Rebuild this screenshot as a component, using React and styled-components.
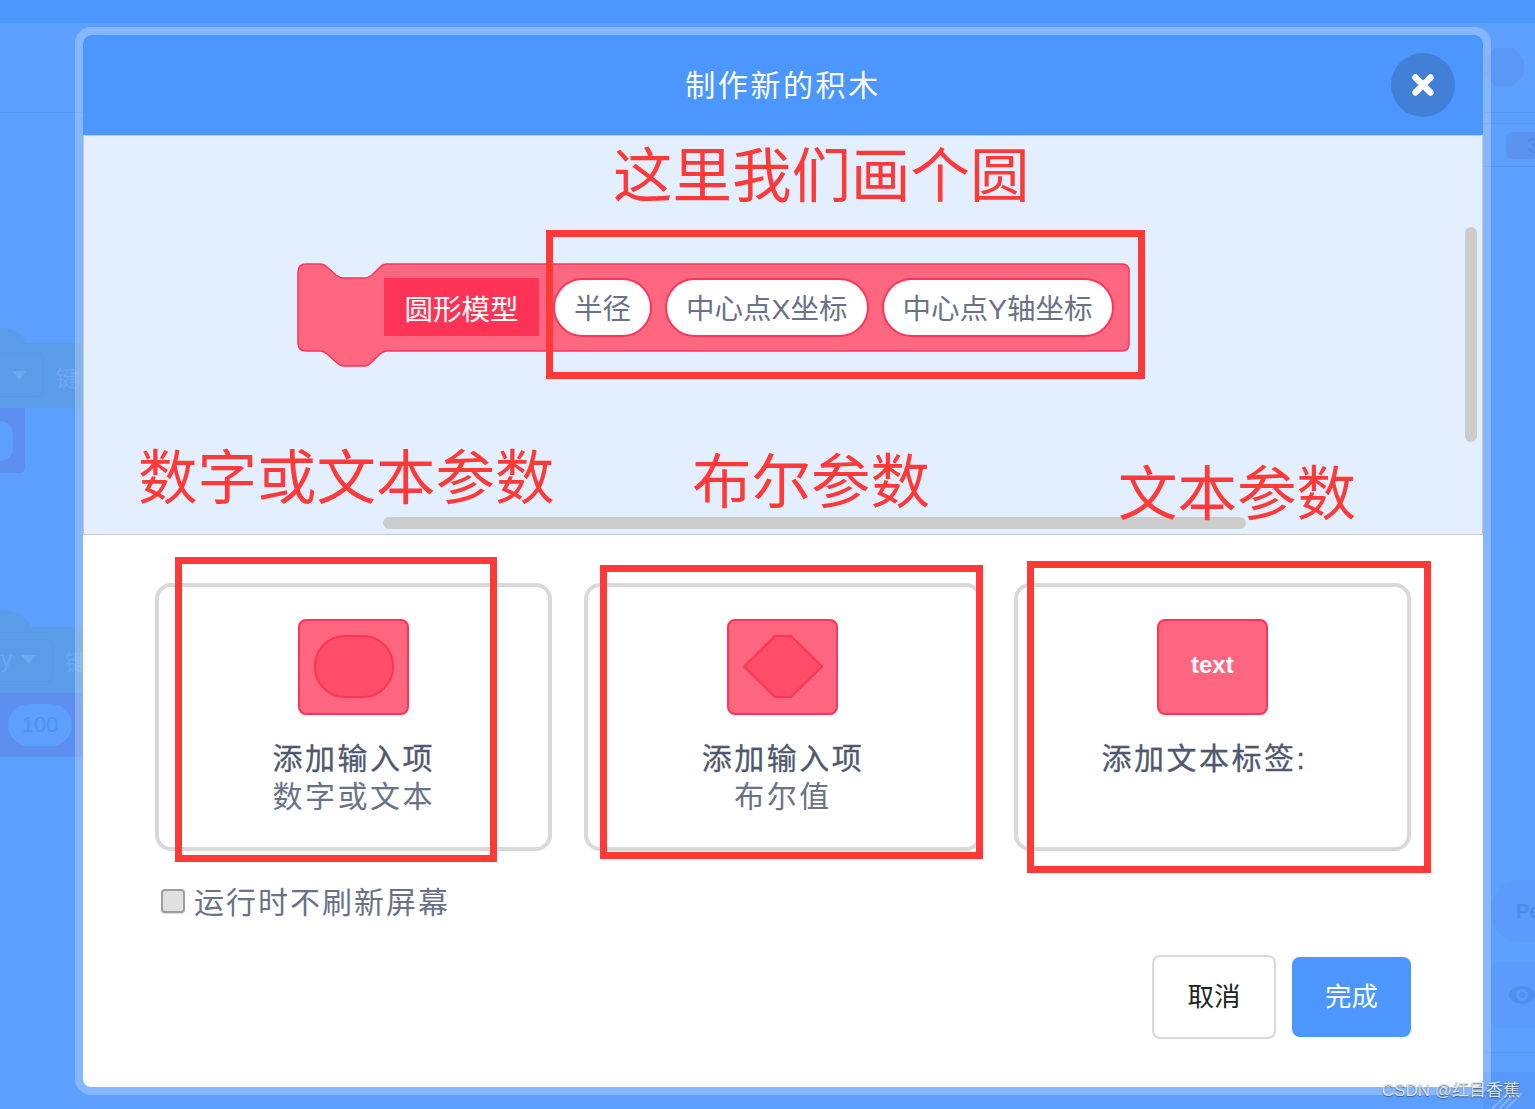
import React from "react";
import styled, { createGlobalStyle } from "styled-components";

const CJK = `"Liberation Sans", "Noto Sans CJK SC", sans-serif`;

const GlobalStyle = createGlobalStyle`
  html, body {
    margin: 0;
    padding: 0;
    background: #5c9fff;
  }
  * {
    box-sizing: border-box;
  }
`;

const Page = styled.div`
  position: relative;
  width: 1535px;
  height: 1109px;
  overflow: hidden;
  background: #5c9fff;
  font-family: ${CJK};
`;

const TopBar = styled.div`
  height: 23px;
  background: #4c97ff;
`;

/* faint workspace behind the overlay */
const LeftPane = styled.div`
  position: absolute;
  left: 0;
  top: 112px;
  width: 83px;
  display: flex;
  flex-direction: column;
`;

const RightPane = styled.div`
  position: absolute;
  left: 1483px;
  right: 0;
  top: 47px;
  bottom: 0;
  display: flex;
  flex-direction: column;
  justify-content: space-between;
`;

const PaneGroup = styled.div`
  display: flex;
  flex-direction: column;
`;

const Rule = styled.div`
  height: 1px;
  flex: none;
  margin-top: ${(p) => p.$top || 0}px;
  background: #5596f5;
`;

const Script = styled.div`
  display: flex;
  flex-direction: column;
  margin-top: ${(p) => p.$top}px;
`;

const Hat = styled.div`
  width: ${(p) => p.$w}px;
  height: ${(p) => p.$h}px;
  background: #5b9ce8;
  border-radius: 0 100% 0 0;
`;

const ScriptRow = styled.div`
  width: ${(p) => p.$w || 83}px;
  height: ${(p) => p.$h}px;
  display: flex;
  align-items: center;
  gap: 12px;
  background: ${(p) => p.$color || "#5b9ce8"};
  border-radius: ${(p) => p.$radius || "0"};
`;

const Dropdown = styled.div`
  width: ${(p) => p.$w}px;
  height: 43px;
  flex: none;
  display: flex;
  align-items: center;
  justify-content: flex-end;
  gap: 9px;
  padding-right: 15px;
  border: 1px solid #5a96e2;
  border-left: none;
  border-radius: 0 6px 6px 0;
  color: #6aa8f2;
  font-size: 22px;
`;

const FaintKey = styled.span`
  color: #6aa8f2;
  font-size: 22px;
  white-space: nowrap;
`;

const Socket = styled.div`
  width: 13px;
  height: 40px;
  background: #5c9fff;
  border-radius: 0 20px 20px 0;
`;

const CountPill = styled.div`
  width: 64px;
  height: 42px;
  margin-left: 8px;
  display: flex;
  align-items: center;
  justify-content: center;
  background: #5c9fff;
  border-radius: 21px;
  color: #5090f0;
  font-size: 22px;
`;

const SideChip = styled.div`
  width: 40px;
  height: 27px;
  margin: 8px 0 0 23px;
  padding-left: 21px;
  background: #5a94ee;
  border-radius: 7px;
  color: #4f8be6;
  font-size: 22px;
  line-height: 27px;
  font-weight: 700;
`;

const SidePill = styled.div`
  width: 70px;
  height: 62px;
  margin-left: 8px;
  padding-left: 25px;
  background: #5a9bfb;
  border-radius: 30px;
  color: #4f8be6;
  font-size: 20px;
  font-weight: 700;
  line-height: 62px;
`;

const SideBox = styled.div`
  width: 60px;
  height: 66px;
  margin: 20px 0 0 8px;
  padding-left: 17px;
  display: flex;
  align-items: center;
  background: #5a9bfb;
  border-radius: 6px;
`;

const SideFooter = styled.div`
  height: 37px;
  margin-top: 19px;
  display: flex;
  align-items: flex-end;
  padding-left: 7px;
  background: #5699fb;
`;

const Modal = styled.div`
  position: relative;
  z-index: 1;
  width: 1416px;
  height: 1068px;
  margin: 4px 0 0 75px;
  border: 8px solid rgba(255, 255, 255, 0.25);
  border-radius: 16px;
  background-clip: padding-box;
`;

const ModalInner = styled.div`
  height: 100%;
  display: flex;
  flex-direction: column;
  border-radius: 8px;
  overflow: hidden;
  background: #fff;
`;

const Header = styled.header`
  position: relative;
  height: 100px;
  flex: none;
  padding-bottom: 4px;
  display: flex;
  align-items: center;
  justify-content: center;
  background: #4c97ff;
  color: #fff;
  font-size: 30px;
  letter-spacing: 2.6px;
`;

const CloseButton = styled.button`
  position: absolute;
  right: 28px;
  top: 18px;
  width: 64px;
  height: 64px;
  padding: 0;
  border: none;
  border-radius: 50%;
  background: #4280d7;
  display: flex;
  align-items: center;
  justify-content: center;
`;

const Preview = styled.section`
  position: relative;
  height: 400px;
  flex: none;
  padding: 128px 0 0 214px;
  background: #e3efff;
  border: 1px solid #c9c9c9;
  overflow: hidden;
`;

const Block = styled.div`
  position: relative;
  width: 832px;
  height: 88px;
  display: flex;
  align-items: center;
  gap: 13px;
  padding: 0 0 2px 86px;
`;

const BlockShape = styled.svg`
  position: absolute;
  left: 0;
  top: 0;
  overflow: visible;
`;

const BlockLabel = styled.div`
  position: relative;
  width: 155px;
  height: 58px;
  margin-right: 1px;
  display: flex;
  align-items: center;
  justify-content: center;
  background: #ff3355;
  color: #fff;
  font-size: 28.5px;
`;

const Pill = styled.div`
  position: relative;
  height: 59px;
  padding: 0 19px 1px;
  display: flex;
  align-items: center;
  background: #fff;
  border: 2px solid #ff3355;
  border-radius: 30px;
  color: #6b7188;
  font-size: 28.5px;
  white-space: nowrap;
`;

const ScrollThumb = styled.div`
  position: absolute;
  background: #cccccc;
  border-radius: 6px;
  ${(p) =>
    p.$vertical
      ? `right: 5px; top: 91px; width: 12px; height: 215px;`
      : `left: 299px; bottom: 5px; width: 863px; height: 12px;`}
`;

const Body = styled.section`
  flex: 1;
  padding: 48px 72px 0;
`;

const Cards = styled.div`
  display: grid;
  grid-template-columns: repeat(3, 1fr);
  gap: 32px;
`;

const Card = styled.div`
  height: 268px;
  padding-top: 32px;
  display: flex;
  flex-direction: column;
  align-items: center;
  border: 4px solid #d9d9d9;
  border-radius: 16px;
`;

const IconBox = styled.div`
  width: 111px;
  height: 96px;
  flex: none;
  display: flex;
  align-items: center;
  justify-content: center;
  padding-bottom: ${(p) => p.$lift || 0}px;
  background: #ff6680;
  border: 2px solid #ff3355;
  border-radius: 8px;
`;

const IconText = styled.span`
  color: #fff;
  font-family: "Liberation Sans", sans-serif;
  font-size: 24px;
  font-weight: 700;
`;

const CardLabel = styled.div`
  margin: 25px ${(p) => p.$shift || 0}px 0 0;
  color: #50576e;
  font-size: 30px;
  line-height: 38px;
  letter-spacing: 2.5px;
  text-align: center;
  -webkit-text-stroke: 0.3px #50576e;
`;

const CardSub = styled.div`
  color: #6b7188;
  font-size: 30px;
  line-height: 38px;
  letter-spacing: 2.5px;
  text-align: center;
`;

const CheckRow = styled.label`
  display: flex;
  align-items: flex-start;
  gap: 9px;
  margin: 33px 0 0 6px;
  height: 39px;
  color: #6b7188;
  font-size: 30px;
  line-height: 38px;
  letter-spacing: 2px;
`;

const CheckBox = styled.span`
  width: 24px;
  height: 24px;
  margin-top: 5px;
  flex: none;
  background: #e0e0e0;
  border: 2px solid #9e9e9e;
  border-radius: 4px;
  box-shadow: 0 1px 1px rgba(0, 0, 0, 0.15);
`;

const Actions = styled.div`
  display: flex;
  justify-content: flex-end;
  align-items: center;
  gap: 16px;
  margin-top: 32px;
`;

const CancelButton = styled.button`
  width: 124px;
  height: 84px;
  padding: 0 0 5px;
  background: #fff;
  border: 2px solid #d9d9d9;
  border-radius: 8px;
  color: #222;
  font-family: ${CJK};
  font-size: 26.5px;
`;

const DoneButton = styled.button`
  width: 119px;
  height: 80px;
  padding: 0 0 5px;
  background: #4c97ff;
  border: none;
  border-radius: 8px;
  color: #fff;
  font-family: ${CJK};
  font-size: 26.5px;
`;

/* red marks someone drew over the screenshot */
const MarkRect = styled.div`
  position: absolute;
  z-index: 2;
  left: ${(p) => p.$x}px;
  top: ${(p) => p.$y}px;
  width: ${(p) => p.$w}px;
  height: ${(p) => p.$h}px;
  border: 7px solid #ff3838;
  pointer-events: none;
`;

const MarkText = styled.div`
  position: absolute;
  z-index: 2;
  left: ${(p) => p.$x}px;
  top: ${(p) => p.$y}px;
  color: #ff3838;
  font-size: 59.5px;
  line-height: 62px;
  white-space: nowrap;
`;

const Watermark = styled.div`
  position: absolute;
  z-index: 3;
  right: 15px;
  top: 1080px;
  color: #dde1e8;
  font-family: "Liberation Sans", "Noto Sans CJK SC", sans-serif;
  font-size: 17px;
  line-height: 22px;
  text-shadow: 0 1px 1px rgba(60, 60, 60, 0.7);
`;

const Caret = () => (
  <svg width="16" height="10" viewBox="0 0 16 10">
    <path d="M0 0 H15 L7.5 9 Z" fill="#6aa8f2" />
  </svg>
);

const Background = () => (
  <>
    <LeftPane>
      <Rule />
      <Script $top={215}>
        <Hat $w={25} $h={15} />
        <ScriptRow $h={65}>
          <Dropdown $w={44}>
            <Caret />
          </Dropdown>
          <FaintKey>键</FaintKey>
        </ScriptRow>
        <ScriptRow $w={25} $h={65} $color="#5c8ff0" $radius="0 0 5px 0">
          <Socket />
        </ScriptRow>
      </Script>
      <Script $top={137}>
        <Hat $w={30} $h={17} />
        <ScriptRow $h={66}>
          <Dropdown $w={53}>
            y
            <Caret />
          </Dropdown>
          <FaintKey>键</FaintKey>
        </ScriptRow>
        <ScriptRow $h={64} $color="#5c8ff0">
          <CountPill>100</CountPill>
        </ScriptRow>
      </Script>
    </LeftPane>
    <RightPane>
      <PaneGroup>
        <svg width="42" height="40" viewBox="0 0 42 40">
          <path d="M12 1 H30 L41 12 V28 L30 39 H12 L1 28 V12 Z" fill="#5b97f5" />
        </svg>
        <Rule $top={25} />
        <Rule $top={10} />
        <SideChip>3</SideChip>
        <Rule $top={7} />
      </PaneGroup>
      <PaneGroup>
        <SidePill>Pe</SidePill>
        <SideBox>
          <svg width="27" height="22" viewBox="0 0 27 22">
            <ellipse cx="14" cy="11" rx="13" ry="9" fill="#4f8fee" />
            <circle cx="14" cy="11" r="6" fill="#5a9bfb" />
            <circle cx="14" cy="11" r="3" fill="#4f8fee" />
          </svg>
        </SideBox>
        <Rule $top={24} />
        <SideFooter>
          <svg width="34" height="17" viewBox="0 0 34 17">
            <path d="M2 17 L18 1 M9 17 L25 1 M16 17 L32 1" stroke="#7fb0f5" strokeWidth="2" />
          </svg>
        </SideFooter>
      </PaneGroup>
    </RightPane>
  </>
);

const BlockOutline = () => (
  <BlockShape width="832" height="103" viewBox="0 0 832 103">
    <path
      d="M0 8 Q0 0 8 0 H22 Q26 0 29 3 L38 11 Q42 14 46 14 H66 Q70 14 74 11 L82 3 Q85 0 89 0 H824 Q831 0 831 7 V80 Q831 87 824 87 H89 Q85 87 82 90 L74 98 Q70 102 66 102 H46 Q42 102 38 98 L29 90 Q26 87 22 87 H8 Q0 87 0 79 Z"
      fill="#ff6680"
      stroke="#ff3355"
      strokeWidth="1.5"
    />
  </BlockShape>
);

const cards = [
  {
    title: "添加输入项",
    sub: "数字或文本",
    lift: 1,
    icon: (
      <svg width="80" height="63" viewBox="0 0 80 63">
        <rect x="1" y="1" width="78" height="61" rx="30" fill="#ff4d6a" stroke="#ff3355" strokeWidth="2" />
      </svg>
    ),
  },
  {
    title: "添加输入项",
    sub: "布尔值",
    lift: 1,
    icon: (
      <svg width="80" height="63" viewBox="0 0 80 63">
        <path d="M1 31.5 L32 1 H48 L79 31.5 L48 62 H32 Z" fill="#ff4d6a" stroke="#ff3355" strokeWidth="2" />
      </svg>
    ),
  },
  {
    title: "添加文本标签:",
    icon: <IconText>text</IconText>,
    lift: 4,
    shift: 16,
  },
];

export default function App() {
  return (
    <Page>
      <GlobalStyle />
      <TopBar />
      <Background />
      <Modal>
        <ModalInner>
          <Header>
            制作新的积木
            <CloseButton aria-label="close">
              <svg width="24" height="24" viewBox="0 0 24 24">
                <path d="M4.5 4.5 L19.5 19.5 M19.5 4.5 L4.5 19.5" stroke="#fff" strokeWidth="6.5" strokeLinecap="round" />
              </svg>
            </CloseButton>
          </Header>
          <Preview>
            <Block>
              <BlockOutline />
              <BlockLabel>圆形模型</BlockLabel>
              <Pill>半径</Pill>
              <Pill>中心点X坐标</Pill>
              <Pill>中心点Y轴坐标</Pill>
            </Block>
            <ScrollThumb $vertical />
            <ScrollThumb />
          </Preview>
          <Body>
            <Cards>
              {cards.map((card) => (
                <Card key={card.title + card.sub}>
                  <IconBox $lift={card.lift}>{card.icon}</IconBox>
                  <CardLabel $shift={card.shift}>{card.title}</CardLabel>
                  {card.sub && <CardSub>{card.sub}</CardSub>}
                </Card>
              ))}
            </Cards>
            <CheckRow>
              <CheckBox />
              运行时不刷新屏幕
            </CheckRow>
            <Actions>
              <CancelButton>取消</CancelButton>
              <DoneButton>完成</DoneButton>
            </Actions>
          </Body>
        </ModalInner>
      </Modal>

      <MarkRect $x={546} $y={230} $w={599} $h={149} />
      <MarkRect $x={175} $y={557} $w={322} $h={305} />
      <MarkRect $x={600} $y={565} $w={383} $h={294} />
      <MarkRect $x={1027} $y={561} $w={404} $h={312} />
      <MarkText $x={613} $y={146}>这里我们画个圆</MarkText>
      <MarkText $x={138} $y={448}>数字或文本参数</MarkText>
      <MarkText $x={692} $y={452}>布尔参数</MarkText>
      <MarkText $x={1118} $y={464}>文本参数</MarkText>
      <Watermark>CSDN @红目香蕉</Watermark>
    </Page>
  );
}
